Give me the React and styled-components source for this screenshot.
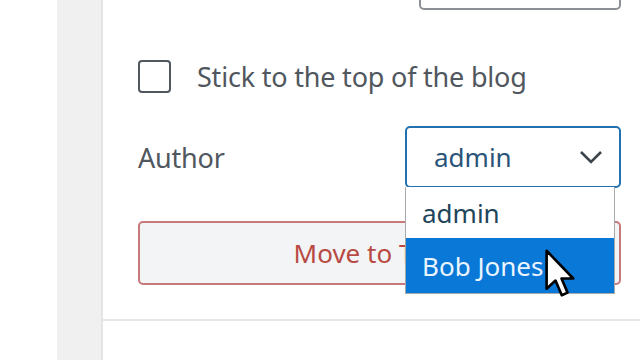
import React from 'react';
import styled, { createGlobalStyle } from 'styled-components';

const GlobalStyle = createGlobalStyle`
  html, body { margin: 0; padding: 0; background: #fff; overflow: hidden; }
  body { font-family: "Noto Sans", "Open Sans", sans-serif; }
`;

const Page = styled.div`
  display: flex;
  width: 640px;
  height: 360px;
  overflow: hidden;
`;

const Gutter = styled.div`
  width: 57px;
  flex-shrink: 0;
  background: #fff;
`;

const Rail = styled.div`
  width: 44px;
  flex-shrink: 0;
  background: #f0f0f1;
`;

const Panel = styled.div`
  flex: 1;
  border-left: 2px solid #e4e4e6;
  display: flex;
  flex-direction: column;
`;

const Section = styled.div`
  padding: 0 19px 0 35px;
  display: flex;
  flex-direction: column;
`;

const TopInput = styled.div`
  align-self: flex-end;
  width: 198px;
  height: 40px;
  margin-top: -34px;
  border: 2px solid #8c8f94;
  border-radius: 5px;
`;

const CheckRow = styled.label`
  display: flex;
  align-items: center;
  gap: 26px;
  margin-top: 49px;
  height: 34px;
`;

const Box = styled.span`
  width: 29px;
  height: 29px;
  border: 2px solid #50575e;
  border-radius: 4px;
  flex-shrink: 0;
`;

const Text = styled.span`
  font-size: 27px;
  color: ${p => p.color || '#50575e'};
  letter-spacing: -0.2px;
`;

const AuthorRow = styled.div`
  display: flex;
  align-items: center;
  justify-content: space-between;
  margin-top: 33px;
`;

const SelectWrap = styled.div`
  position: relative;
  width: 216px;
`;

const Select = styled.div`
  box-sizing: border-box;
  height: 62px;
  border: 2px solid #2271b1;
  border-radius: 5px;
  display: flex;
  align-items: center;
  justify-content: space-between;
  padding: 0 16px 0 27px;
  color: #2a5478;
  font-size: 26px;
`;

const Menu = styled.ul`
  position: absolute;
  top: 61px;
  left: 0;
  width: 210px;
  box-sizing: border-box;
  margin: 0;
  padding: 0;
  list-style: none;
  background: #fff;
  border: 1px solid #a7aaad;
  border-top: none;
  z-index: 2;
`;

const Option = styled.li`
  height: ${p => p.h}px;
  display: flex;
  align-items: center;
  padding-left: 16px;
  font-size: 26px;
  background: ${p => (p.active ? '#0a78d7' : '#fff')};
  color: ${p => (p.active ? '#eaf5ff' : '#21455a')};
`;

const TrashButton = styled.div`
  box-sizing: border-box;
  margin-top: 33px;
  height: 64px;
  border: 2px solid #c8797a;
  border-radius: 5px;
  background: #f3f4f6;
  display: flex;
  align-items: center;
  justify-content: center;
  color: #b84a43;
  font-size: 26px;
`;

const Divider = styled.div`
  margin-top: 34px;
  height: 2px;
  background: #e6e6e8;
`;

const Cursor = styled.svg`
  position: absolute;
  left: 139px;
  top: 122px;
  z-index: 3;
`;

const Chevron = () => (
  <svg width="24" height="14" viewBox="0 0 24 14">
    <path d="M2 2 L12 12 L22 2" fill="none" stroke="#3c434a" strokeWidth="2.6" />
  </svg>
);

export default function App() {
  return (
    <Page>
      <GlobalStyle />
      <Gutter />
      <Rail />
      <Panel>
        <Section>
          <TopInput />
          <CheckRow>
            <Box />
            <Text>Stick to the top of the blog</Text>
          </CheckRow>
          <AuthorRow>
            <Text>Author</Text>
            <SelectWrap>
              <Select>
                <span>admin</span>
                <Chevron />
              </Select>
              <Menu>
                <Option h={51}>admin</Option>
                <Option h={55} active>Bob Jones</Option>
              </Menu>
              <Cursor width="34" height="50" viewBox="0 0 13 19">
                <path
                  d="M1 1 L1 15.5 L4.4 12.4 L6.8 18 L9 17 L6.7 11.6 L11.2 11.6 Z"
                  fill="#fff"
                  stroke="#000"
                  strokeWidth="1"
                  strokeLinejoin="round"
                />
              </Cursor>
            </SelectWrap>
          </AuthorRow>
          <TrashButton>Move to Trash</TrashButton>
        </Section>
        <Divider />
      </Panel>
    </Page>
  );
}
